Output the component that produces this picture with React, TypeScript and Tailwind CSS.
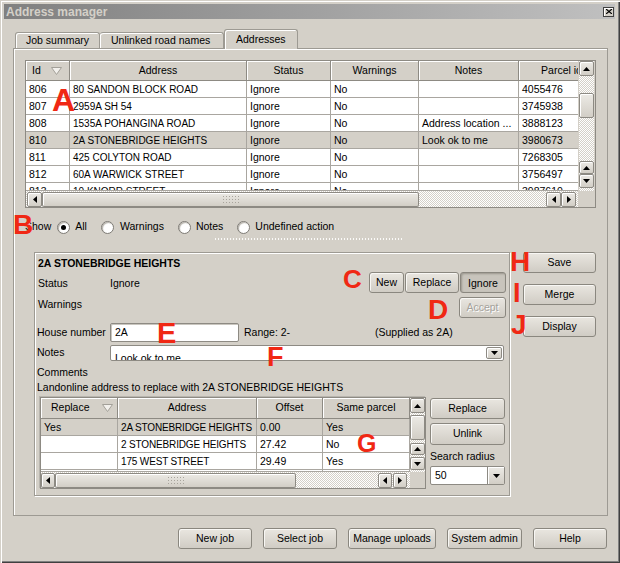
import React from "react";

type Dir = "u" | "d" | "l" | "r";

const raised =
  "border border-[#8d8a83] rounded-[2px] bg-[linear-gradient(#eceae5,#d2cec6)] shadow-[inset_1px_1px_0_#ffffff]";
const hatch =
  "bg-[#ffffff] bg-[image:repeating-conic-gradient(#d4d0c8_0_25%,#ffffff_0_50%)] bg-[length:2px_2px]";

function Tri({ d }: { d: Dir }) {
  const horiz = d === "u" || d === "d";
  const pts = { u: "0,4 3.5,0 7,4", d: "0,0 7,0 3.5,4", l: "4,0 4,7 0,3.5", r: "0,0 0,7 4,3.5" }[d];
  return (
    <svg width={horiz ? 7 : 4} height={horiz ? 4 : 7} viewBox={horiz ? "0 0 7 4" : "0 0 4 7"}>
      <polygon points={pts} fill="#000" />
    </svg>
  );
}

function SBtn({ d, cls }: { d: Dir; cls: string }) {
  return (
    <div className={`${raised} flex items-center justify-center shrink-0 ${cls}`}>
      <Tri d={d} />
    </div>
  );
}

function Grip() {
  const dots = [];
  for (let i = 0; i < 6; i++)
    for (let j = 0; j < 3; j++)
      dots.push(<rect key={`${i}-${j}`} x={1 + i * 3} y={1 + j * 3} width="1" height="1" fill="#a8a49c" />);
  return (
    <svg width="18" height="9" viewBox="0 0 18 9">
      {dots}
    </svg>
  );
}

function SortArrow() {
  return (
    <svg width="11" height="8" viewBox="0 0 11 8">
      <polygon points="0.5,0.5 10.5,0.5 5.5,7.5" fill="#f2f0ec" stroke="#a3a099" strokeWidth="1" />
    </svg>
  );
}

function Btn({
  label,
  cls,
  pressed,
  disabled,
}: {
  label: string;
  cls: string;
  pressed?: boolean;
  disabled?: boolean;
}) {
  return (
    <div
      className={`flex items-center justify-center shrink-0 rounded-[3px] border border-[#8a877f] whitespace-nowrap ${
        pressed
          ? "bg-[#c8c4bc] shadow-[inset_1px_1px_2px_#9a968e] pt-[2px]"
          : "bg-[linear-gradient(#e9e6e0,#d0ccc4)] shadow-[inset_1px_1px_0_#f8f7f4]"
      } ${disabled ? "text-[#a5a29b] [text-shadow:1px_1px_0_#ffffff]" : "text-black"} ${cls}`}
    >
      {label}
    </div>
  );
}

function Radio({ checked }: { checked?: boolean }) {
  return (
    <div className="w-[13px] h-[13px] shrink-0 rounded-full border border-[#7d7a74] bg-white shadow-[inset_1px_1px_1px_#b5b1a9] flex items-center justify-center">
      {checked && <div className="w-[5px] h-[5px] rounded-full bg-black" />}
    </div>
  );
}

const cellBase =
  "shrink-0 h-full border-r border-b border-[#a9a6a0] pl-[3px] whitespace-nowrap overflow-hidden leading-[17px]";
const headBase =
  "shrink-0 h-full border-r border-b border-[#8d8a83] bg-[#d4d0c8] shadow-[inset_1px_1px_0_#ffffff] flex items-center whitespace-nowrap overflow-hidden";

const mainRows: string[][] = [
  ["806", "80 SANDON BLOCK ROAD", "Ignore", "No", "", "4055476"],
  ["807", "2959A SH 54", "Ignore", "No", "", "3745938"],
  ["808", "1535A POHANGINA ROAD", "Ignore", "No", "Address location ...", "3888123"],
  ["810", "2A STONEBRIDGE HEIGHTS", "Ignore", "No", "Look ok to me", "3980673"],
  ["811", "425 COLYTON ROAD", "Ignore", "No", "", "7268305"],
  ["812", "60A WARWICK STREET", "Ignore", "No", "", "3756497"],
  ["813", "10 KNORR STREET", "Ignore", "No", "", "3987610"],
];

function MainRow({ r, sel, partial }: { r: string[]; sel?: boolean; partial?: boolean }) {
  return (
    <div className={`flex overflow-hidden ${partial ? "h-[8px]" : "h-[17px]"} ${sel ? "bg-[#d4d0c8]" : "bg-white"}`}>
      <div className={`${cellBase} w-[44px]`}>{r[0]}</div>
      <div className={`${cellBase} w-[177px] text-[10px]`}>{r[1]}</div>
      <div className={`${cellBase} w-[84px]`}>{r[2]}</div>
      <div className={`${cellBase} w-[88px]`}>{r[3]}</div>
      <div className={`${cellBase} w-[100px]`}>{r[4]}</div>
      <div className={`${cellBase} w-[86px]`}>{r[5]}</div>
    </div>
  );
}

const subRows: string[][] = [
  ["Yes", "2A STONEBRIDGE HEIGHTS", "0.00", "Yes"],
  ["", "2 STONEBRIDGE HEIGHTS", "27.42", "No"],
  ["", "175 WEST STREET", "29.49", "Yes"],
  ["", "", "", ""],
];

function SubRow({ r, sel, partial }: { r: string[]; sel?: boolean; partial?: boolean }) {
  return (
    <div className={`flex overflow-hidden ${partial ? "h-[2px]" : "h-[17px]"} ${sel ? "bg-[#d4d0c8]" : "bg-white"}`}>
      <div className={`${cellBase} w-[77px]`}>{r[0]}</div>
      <div className={`${cellBase} w-[139px] text-[10px] tracking-[-0.15px]`}>{r[1]}</div>
      <div className={`${cellBase} w-[66px]`}>{r[2]}</div>
      <div className={`${cellBase} w-[87px]`}>{r[3]}</div>
    </div>
  );
}

const red = "absolute font-bold text-[#f02814] leading-none";

export default function App() {
  return (
    <div className="relative w-[620px] h-[563px] overflow-hidden bg-[#d4d0c8] font-['Liberation_Sans',Arial,sans-serif] text-[10.5px] text-black shadow-[inset_1px_1px_0_#d4d0c8,inset_2px_2px_0_#ffffff,inset_-1px_-1px_0_#404040,inset_-2px_-2px_0_#808080] flex flex-col">
      {/* Title bar */}
      <div className="mt-[4px] ml-[4px] mr-[5px] h-[15px] shrink-0 flex items-center justify-between bg-[linear-gradient(90deg,#808080,#c0c0c0)]">
        <span className="pl-[2px] text-[12px] font-bold text-[#d4d0c8] leading-none">Address manager</span>
        <div className="mr-[1px] w-[11px] h-[10px] flex items-center justify-center bg-[#d4d0c8] border border-[#404040] shadow-[inset_1px_1px_0_#ffffff]">
          <svg width="6" height="5" viewBox="0 0 6 5">
            <path d="M0 0L6 5M6 0L0 5" stroke="#000" strokeWidth="1.2" />
          </svg>
        </div>
      </div>

      {/* Tabs */}
      <div className="mt-[10px] ml-[15px] h-[20px] shrink-0 flex items-end relative z-10">
        <div className="w-[85px] h-[16px] mb-[1px] rounded-t-[3px] border border-b-0 border-[#9d9a93] shadow-[inset_1px_1px_0_#ffffff] flex items-center pl-[10px] pt-[1px]">
          Job summary
        </div>
        <div className="w-[124px] h-[16px] mb-[1px] rounded-t-[3px] border border-b-0 border-l-0 border-[#9d9a93] shadow-[inset_1px_1px_0_#ffffff] flex items-center pl-[11px] pt-[1px]">
          Unlinked road names
        </div>
        <div className="w-[74px] h-[20px] rounded-t-[3px] border border-b-0 border-[#9d9a93] bg-[#d4d0c8] shadow-[inset_1px_1px_0_#ffffff] flex items-center pl-[11px]">
          Addresses
        </div>
      </div>

      {/* Panel */}
      <div className="-mt-[1px] ml-[13px] w-[595px] h-[468px] shrink-0 border border-[#9d9a93] shadow-[inset_1px_1px_0_#ffffff] flex flex-col">
        {/* Main table */}
        <div className="ml-[11px] mt-[11px] w-[571px] h-[148px] shrink-0 border border-[#8d8a83] bg-white flex flex-col">
          <div className="flex h-[130px]">
            <div className="w-[552px] h-full overflow-hidden">
              <div className="flex h-[20px]">
                <div className={`${headBase} w-[44px] pl-[6px] gap-[10px]`}>
                  <span>Id</span>
                  <SortArrow />
                </div>
                <div className={`${headBase} w-[177px] justify-center`}>Address</div>
                <div className={`${headBase} w-[84px] justify-center`}>Status</div>
                <div className={`${headBase} w-[88px] justify-center`}>Warnings</div>
                <div className={`${headBase} w-[100px] justify-center`}>Notes</div>
                <div className={`${headBase} w-[86px] justify-center`}>Parcel id</div>
              </div>
              {mainRows.map((r, i) => (
                <MainRow key={i} r={r} sel={i === 3} partial={i === 6} />
              ))}
            </div>
            <div className="w-[17px] h-full bg-[#d4d0c8] flex">
              <div className={`ml-[1px] w-[15px] h-full flex flex-col ${hatch}`}>
                <SBtn d="u" cls="h-[15px] w-[15px]" />
                <div className="h-[17px]" />
                <div className={`${raised} h-[25px] w-[15px] shrink-0`} />
                <div className="h-[43px]" />
                <SBtn d="u" cls="h-[13px] w-[15px]" />
                <SBtn d="d" cls="h-[14px] w-[15px]" />
                <div className="h-[3px]" />
              </div>
            </div>
          </div>
          <div className="flex h-[16px] bg-[#d4d0c8]">
            <div className={`w-[552px] h-full flex items-center ${hatch}`}>
              <SBtn d="l" cls="ml-[1px] w-[15px] h-[15px]" />
              <div className={`${raised} w-[377px] h-[15px] shrink-0 flex items-center justify-center`}>
                <Grip />
              </div>
              <div className="w-[127px]" />
              <SBtn d="l" cls="w-[15px] h-[15px]" />
              <SBtn d="r" cls="w-[15px] h-[15px]" />
            </div>
            <div className="w-[17px] h-full bg-[#d4d0c8]" />
          </div>
        </div>

        {/* Filter row */}
        <div className="mt-[11px] ml-[11px] h-[16px] shrink-0 flex items-center">
          <span>Show</span>
          <div className="ml-[6px]">
            <Radio checked />
          </div>
          <span className="ml-[5px]">All</span>
          <div className="ml-[14px]">
            <Radio />
          </div>
          <span className="ml-[6px]">Warnings</span>
          <div className="ml-[14px]">
            <Radio />
          </div>
          <span className="ml-[5px]">Notes</span>
          <div className="ml-[14px]">
            <Radio />
          </div>
          <span className="ml-[5px]">Undefined action</span>
        </div>
        <div className="mt-[3px] ml-[201px] w-[187px] h-[2px] shrink-0 bg-[image:repeating-linear-gradient(90deg,#fbfaf8_0_1px,#d4d0c8_1px_3px)]" />

        {/* Lower area */}
        <div className="mt-[12px] ml-[20px] flex gap-[13px]">
          {/* Group box */}
          <div className="w-[476px] h-[244px] shrink-0 border border-[#9d9a93] shadow-[inset_1px_1px_0_#ffffff,1px_1px_0_#ffffff] flex flex-col">
            {/* top section */}
            <div className="h-[65px] shrink-0 flex justify-between">
              <div className="pl-[3px] flex flex-col">
                <div className="mt-[3px] h-[14px] leading-[14px] font-bold">2A STONEBRIDGE HEIGHTS</div>
                <div className="mt-[6px] h-[14px] leading-[14px] flex">
                  <span className="w-[72px]">Status</span>
                  <span>Ignore</span>
                </div>
                <div className="mt-[7px] h-[14px] leading-[14px]">Warnings</div>
              </div>
              <div className="pr-[3px] flex flex-col items-end">
                <div className="mt-[19px] flex gap-[1px]">
                  <Btn label="New" cls="w-[35px] h-[21px]" />
                  <Btn label="Replace" cls="w-[54px] h-[21px]" />
                  <Btn label="Ignore" cls="w-[46px] h-[21px]" pressed />
                </div>
                <Btn label="Accept" cls="mt-[4px] w-[47px] h-[21px]" disabled />
              </div>
            </div>
            {/* House number */}
            <div className="mt-[5px] h-[19px] shrink-0 flex items-center">
              <span className="w-[75px] pl-[2px]">House number</span>
              <div className="w-[129px] h-[19px] rounded-[2px] border border-[#8d8a83] bg-white shadow-[inset_1px_1px_0_#c9c6bf] flex items-center pl-[4px]">
                2A
              </div>
              <span className="ml-[5px] w-[131px]">Range: 2-</span>
              <span>(Supplied as 2A)</span>
            </div>
            {/* Notes */}
            <div className="mt-[3px] h-[16px] shrink-0 flex items-center">
              <span className="w-[75px] pl-[2px]">Notes</span>
              <div className="w-[394px] h-[16px] rounded-[2px] border border-[#8d8a83] bg-white overflow-hidden flex items-start">
                <span className="pl-[4px] pt-[5px] leading-[14px] whitespace-nowrap">Look ok to me</span>
                <SBtn d="d" cls="ml-auto mt-[1px] mr-[1px] w-[16px] h-[12px]" />
              </div>
            </div>
            <div className="mt-[4px] h-[14px] shrink-0 leading-[14px] pl-[2px]">Comments</div>
            <div className="mt-[1px] h-[14px] shrink-0 leading-[14px] pl-[2px] whitespace-nowrap">
              Landonline address to replace with 2A STONEBRIDGE HEIGHTS
            </div>
            {/* Sub table section */}
            <div className="mt-[3px] ml-[5px] flex gap-[4px]">
              <div className="w-[386px] h-[92px] shrink-0 border border-[#8d8a83] bg-white shadow-[-1px_-1px_0_#b8b5ae] flex flex-col">
                <div className="flex h-[74px]">
                  <div className="w-[369px] h-full overflow-hidden">
                    <div className="flex h-[21px]">
                      <div className={`${headBase} w-[77px] pl-[10px] gap-[12px]`}>
                        <span>Replace</span>
                        <SortArrow />
                      </div>
                      <div className={`${headBase} w-[139px] justify-center`}>Address</div>
                      <div className={`${headBase} w-[66px] justify-center`}>Offset</div>
                      <div className={`${headBase} w-[87px] justify-center`}>Same parcel</div>
                    </div>
                    {subRows.map((r, i) => (
                      <SubRow key={i} r={r} sel={i === 0} partial={i === 3} />
                    ))}
                  </div>
                  <div className={`w-[15px] h-full flex flex-col ${hatch}`}>
                    <SBtn d="u" cls="h-[15px] w-[15px]" />
                    <div className="h-[2px]" />
                    <div className={`${raised} h-[25px] w-[15px] shrink-0`} />
                    <div className="h-[3px]" />
                    <SBtn d="u" cls="h-[12px] w-[15px]" />
                    <div className="h-[2px]" />
                    <SBtn d="d" cls="h-[13px] w-[15px]" />
                  </div>
                </div>
                <div className="flex h-[16px] bg-[#d4d0c8]">
                  <div className={`w-[369px] h-full flex items-center ${hatch}`}>
                    <SBtn d="l" cls="w-[14px] h-[15px]" />
                    <div className={`${raised} w-[241px] h-[15px] shrink-0 flex items-center justify-center`}>
                      <Grip />
                    </div>
                    <div className="w-[82px]" />
                    <SBtn d="l" cls="w-[14px] h-[15px]" />
                    <SBtn d="r" cls="ml-[1px] w-[14px] h-[15px]" />
                  </div>
                  <div className="w-[15px] h-full bg-[#d4d0c8]" />
                </div>
              </div>
              <div className="w-[75px] flex flex-col">
                <Btn label="Replace" cls="mt-[1px] w-[75px] h-[21px]" />
                <Btn label="Unlink" cls="mt-[4px] w-[75px] h-[22px]" />
                <div className="mt-[4px] h-[14px] leading-[14px] whitespace-nowrap">Search radius</div>
                <div className="mt-[3px] w-[75px] h-[19px] rounded-[2px] border border-[#8d8a83] bg-white flex items-center">
                  <span className="pl-[4px]">50</span>
                  <div className="ml-auto w-[17px] h-full border-l border-[#8d8a83] bg-[linear-gradient(#eceae5,#d2cec6)] shadow-[inset_1px_1px_0_#ffffff] flex items-center justify-center">
                    <Tri d="d" />
                  </div>
                </div>
              </div>
            </div>
          </div>

          {/* Right buttons */}
          <div className="w-[73px] flex flex-col">
            <Btn label="Save" cls="w-[73px] h-[21px]" />
            <Btn label="Merge" cls="mt-[11px] w-[73px] h-[21px]" />
            <Btn label="Display" cls="mt-[11px] w-[73px] h-[21px]" />
          </div>
        </div>
      </div>

      {/* Bottom buttons */}
      <div className="mt-[12px] ml-[178px] flex gap-[11px]">
        <Btn label="New job" cls="w-[74px] h-[21px]" />
        <Btn label="Select job" cls="w-[74px] h-[21px]" />
        <Btn label="Manage uploads" cls="w-[88px] h-[21px]" />
        <Btn label="System admin" cls="w-[75px] h-[21px]" />
        <Btn label="Help" cls="w-[74px] h-[21px]" />
      </div>

      {/* Red annotation letters */}
      <span className={`${red} left-[52px] top-[84px] text-[32px]`}>A</span>
      <span className={`${red} left-[13px] top-[211px] text-[28px]`}>B</span>
      <span className={`${red} left-[343px] top-[266px] text-[26px]`}>C</span>
      <span className={`${red} left-[428px] top-[296px] text-[28px]`}>D</span>
      <span className={`${red} left-[157px] top-[319px] text-[29px]`}>E</span>
      <span className={`${red} left-[267px] top-[344px] text-[27px]`}>F</span>
      <span className={`${red} left-[357px] top-[431px] text-[25px]`}>G</span>
      <span className={`${red} left-[510px] top-[248px] text-[28px]`}>H</span>
      <span className={`${red} left-[513px] top-[280px] text-[27px]`}>I</span>
      <span className={`${red} left-[511px] top-[311px] text-[28px]`}>J</span>
    </div>
  );
}
